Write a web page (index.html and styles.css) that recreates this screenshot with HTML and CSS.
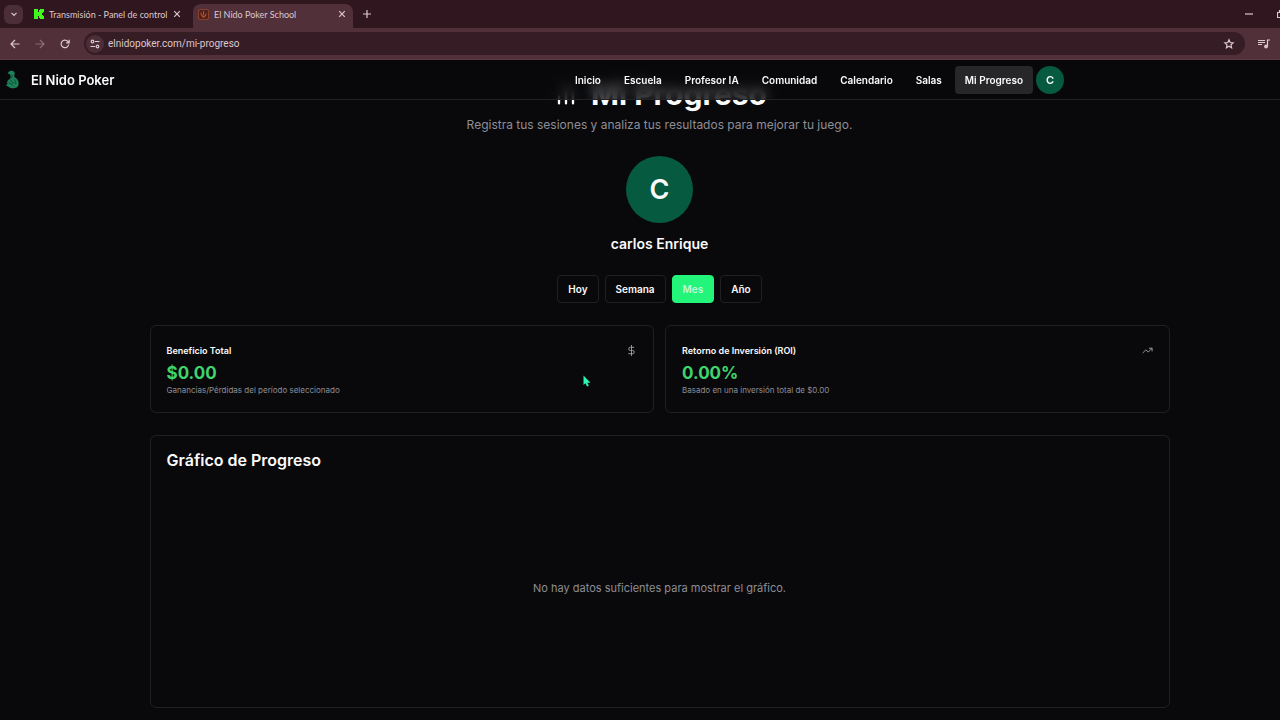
FILE: index.html
```html
<!DOCTYPE html>
<html lang="es">
<head>
    <meta charset="UTF-8">
    <meta name="viewport" content="width=device-width, initial-scale=1.0">
    <title>El Nido Poker School</title>
    <link rel="stylesheet" href="styles.css">
</head>
<body>
    <div class="window">
        <!-- Tabs -->
        <div class="tab-strip">
            <button class="tab-search" aria-label="Buscar pestañas">
                <svg width="8" height="8" viewBox="0 0 8 8"><path d="M1.500 2.800 4 5.300l2.500-2.500"/></svg>
            </button>
            <div class="tab">
                <svg class="favicon" width="10" height="10" viewBox="0 0 10 10"><path fill="#3dfa1c" d="M0 0h4v3h1V1h1V0h4v3H9v1H8v2h1v1h1v3H6V9H5V7H4v3H0z"/></svg>
                <span class="tab-title">Transmisión - Panel de control</span>
                <button class="tab-close" aria-label="Cerrar">
                    <svg width="8" height="8" viewBox="0 0 8 8"><path d="m1.200 1.200 5.600 5.600M6.800 1.200 1.200 6.800"/></svg>
                </button>
            </div>
            <div class="tab tab-active">
                <svg class="favicon" width="11" height="11" viewBox="0 0 11 11"><rect x=".5" y=".5" width="10" height="10" rx="2" fill="#4a1f1c" stroke="#8a4029"/><path d="M3 3.500c0 5 5 5 5 1M5.500 2v4M4 8h3" fill="none" stroke="#b04f2e"/></svg>
                <span class="tab-title">El Nido Poker School</span>
                <button class="tab-close" aria-label="Cerrar">
                    <svg width="8" height="8" viewBox="0 0 8 8"><path d="m1.200 1.200 5.600 5.600M6.800 1.200 1.200 6.800"/></svg>
                </button>
            </div>
            <button class="new-tab" aria-label="Nueva pestaña">
                <svg width="10" height="10" viewBox="0 0 10 10"><path d="M5 1v8M1 5h8"/></svg>
            </button>
            <div class="window-controls">
                <button aria-label="Minimizar"><svg width="8" height="8" viewBox="0 0 8 8"><path d="M0 4h8"/></svg></button>
                <button aria-label="Restaurar"><svg width="8" height="8" viewBox="0 0 8 8"><path d="M.5 2.500h5v5h-5zM2.500 2V.5h5v5H6"/></svg></button>
            </div>
        </div>

        <!-- Address bar -->
        <div class="toolbar">
            <button aria-label="Atrás"><svg width="10" height="10" viewBox="0 0 10 10"><path d="M9.500 5H1M5 1 1 5l4 4"/></svg></button>
            <button class="off" aria-label="Adelante"><svg width="10" height="10" viewBox="0 0 10 10"><path d="M.5 5H9M5 1l4 4-4 4"/></svg></button>
            <button aria-label="Recargar"><svg width="10" height="10" viewBox="0 0 10 10"><path d="M8.700 5.500A3.800 3.800 0 1 1 7.900 2.500L9 3.600M9.200.8v3H6.200"/></svg></button>
            <div class="address">
                <span class="site-info">
                    <svg width="10" height="10" viewBox="0 0 10 10"><circle cx="2.500" cy="2.500" r="1.300"/><path d="M5 2.500h4.500M.5 7.500H5"/><circle cx="7.500" cy="7.500" r="1.300"/></svg>
                </span>
                <input type="text" value="elnidopoker.com/mi-progreso" aria-label="Dirección">
                <button aria-label="Guardar"><svg width="12" height="12" viewBox="0 0 12 12"><path d="m6 1.800 1.200 2.700 3 .3-2.200 2 .6 3L6 8.300 3.400 9.800l.6-3-2.200-2 3-.3z"/></svg></button>
            </div>
            <button aria-label="Multimedia"><svg width="12" height="10" viewBox="0 0 12 10"><path d="M0 1.500h7M0 3.500h7M0 5.500h4M9.500 7.500V1H12"/><circle cx="8" cy="7.500" r="1.300" fill="#d9b3bd"/></svg></button>
        </div>

        <!-- Page header -->
        <header class="header">
            <a class="brand" href="#">
                <svg width="14" height="19" viewBox="0 0 14 19">
                    <path fill="#1c8058" d="M4 1.500C6 0 9 .5 9.500 2.500c.5 1.800-.3 3-.3 4.300 2 1.500 4.500 3.200 4.500 6.700 0 2.500-1.500 4-3.500 4.500-3 .8-5 0-6.500-1L.5 15l2-.8C1.500 12 2.500 10.500 4 9.500l1.500-1.700C6 6 5.500 5 4.300 4L2.500 3.500z"/>
                    <path fill="none" stroke="#0b3a2a" stroke-width=".7" d="M5 9.500c1 2 2.500 1.500 3.500 4M3.500 12.500c1.500 1.500 3 .5 4.500 3M9 9.500c1.500 1 2 2 1.500 4.500M7 4.500c.5 1.500 0 3-1 4"/>
                </svg>
                <span>El Nido Poker</span>
            </a>
            <nav class="nav">
                <a href="#">Inicio</a>
                <a href="#">Escuela</a>
                <a href="#">Profesor IA</a>
                <a href="#">Comunidad</a>
                <a href="#">Calendario</a>
                <a href="#">Salas</a>
                <a class="current" href="#">Mi Progreso</a>
            </nav>
            <button class="user">C</button>
        </header>

        <main class="main">
            <h1>
                <svg class="icon" width="28" height="28" viewBox="0 0 24 24"><path d="M18 20V10M12 20V4M6 20v-6"/></svg>
                Mi Progreso
            </h1>
            <p class="lead">Registra tus sesiones y analiza tus resultados para mejorar tu juego.</p>

            <div class="avatar">C</div>
            <h2 class="name">carlos Enrique</h2>

            <div class="filters">
                <button>Hoy</button>
                <button>Semana</button>
                <button class="selected">Mes</button>
                <button>Año</button>
            </div>

            <div class="stats">
                <section class="card stat">
                    <div class="stat-head">
                        <h3>Beneficio Total</h3>
                        <svg class="icon" width="11" height="11" viewBox="0 0 24 24"><path d="M12 1v22M17 5H9.500a3.500 3.500 0 0 0 0 7h5a3.500 3.500 0 0 1 0 7H6"/></svg>
                    </div>
                    <p class="value">$0.00</p>
                    <p class="note">Ganancias/Pérdidas del período seleccionado</p>
                </section>
                <section class="card stat">
                    <div class="stat-head">
                        <h3>Retorno de Inversión (ROI)</h3>
                        <svg class="icon" width="11" height="11" viewBox="0 0 24 24"><path d="m22 7-8.500 8.500-5-5L2 17M16 7h6v6"/></svg>
                    </div>
                    <p class="value">0.00%</p>
                    <p class="note">Basado en una inversión total de $0.00</p>
                </section>
            </div>

            <section class="card chart">
                <h2>Gráfico de Progreso</h2>
                <p class="empty">No hay datos suficientes para mostrar el gráfico.</p>
            </section>
        </main>

        <svg class="pointer" width="8" height="12" viewBox="0 0 8 12"><path d="M.5.5v9.500l2-1.700L4 11.500l1.800-.8-1.400-3H7.500z"/></svg>
    </div>
</body>
</html>
```

FILE: styles.css
```css
* {
    box-sizing: border-box;
}

body {
    margin: 0;
    background: #09090b;
    color: #fafafa;
    font-family: Inter, sans-serif;
    font-size: 10px;
    overflow: hidden;
}

h1, h2, h3, p {
    margin: 0;
}

button {
    display: flex;
    align-items: center;
    justify-content: center;
    padding: 0;
    border: none;
    background: none;
    color: inherit;
    font: inherit;
    cursor: pointer;
}

a {
    color: inherit;
    text-decoration: none;
}

/* the window runs past the right edge of the screen */
.window {
    margin-right: -39px;
    min-height: 100vh;
}

/* Browser */
.tab-strip,
.toolbar {
    display: flex;
    align-items: center;
    color: #dcc8cd;
    font-family: Roboto, "Noto Sans", sans-serif;
}

.tab-strip svg,
.toolbar svg {
    fill: none;
    stroke: currentColor;
    stroke-width: 1.2;
}

.tab-strip .favicon {
    flex: none;
    stroke: none;
}

.tab-strip {
    height: 28px;
    padding-left: 4px;
    background: #30161e;
    font-family: Lato, "Noto Sans", sans-serif;
    font-size: 9px;
}

.tab-search {
    width: 19px;
    height: 19px;
    border-radius: 6px;
    background: #4c2e38;
}

.tab {
    display: flex;
    align-items: center;
    gap: 5px;
    width: 160px;
    height: 24px;
    margin-top: 4px;
    padding: 0 7px 4px 5px;
}

.tab-active {
    border-radius: 8px 8px 0 0;
    background: #51303a;
}

.tab-search + .tab {
    width: 170px;
    padding: 0 12px 4px 11px;
}

.tab-title {
    flex: 1;
    white-space: nowrap;
}

.new-tab {
    width: 28px;
    height: 20px;
}

.window-controls {
    display: flex;
    gap: 24px;
    margin-left: auto;
    padding-right: 34px;
}

.toolbar {
    gap: 15px;
    height: 32px;
    padding: 0 49px 0 10px;
    background: #51303a;
    border-bottom: 1px solid #573c44;
}

.toolbar .off {
    opacity: 0.4;
}

.address {
    flex: 1;
    display: flex;
    align-items: center;
    gap: 4px;
    height: 23px;
    margin: 0 -2px 0 -1px;
    padding: 0 10px 0 2px;
    border-radius: 12px;
    background: #361c25;
}

.site-info {
    display: flex;
    align-items: center;
    justify-content: center;
    width: 18px;
    height: 18px;
    border-radius: 50%;
    background: #4c2e38;
}

.address input {
    flex: 1;
    padding: 0;
    border: none;
    outline: none;
    background: none;
    color: inherit;
    font: inherit;
}

/* Page header */
.header {
    position: sticky;
    top: 0;
    z-index: 1;
    display: flex;
    align-items: center;
    height: 40px;
    padding: 0 255px 0 5px;
    border-bottom: 1px solid #222225;
    background: rgba(9, 9, 11, 0.7);
    backdrop-filter: blur(6px);
}

.brand {
    display: flex;
    align-items: center;
    gap: 12px;
    font-size: 13px;
    font-weight: 600;
}

.nav {
    display: flex;
    gap: 3px;
    margin-left: auto;
    font-weight: 600;
}

.nav a {
    padding: 0 10px;
    border-radius: 4px;
    line-height: 28px;
}

.nav .current {
    background: #27272a;
}

.user {
    width: 28px;
    height: 28px;
    margin-left: 3px;
    border-radius: 50%;
    background: #055a40;
    font-size: 11px;
    font-weight: 600;
}

/* Progress page */
.main {
    display: flex;
    flex-direction: column;
    align-items: center;
    max-width: 1020px;
    margin: -24px auto 0;
}

.icon {
    fill: none;
    stroke: currentColor;
    stroke-width: 2;
    stroke-linecap: round;
    stroke-linejoin: round;
}

h1 {
    display: flex;
    align-items: center;
    gap: 11px;
    font-size: 30px;
    font-weight: 700;
    line-height: 36px;
}

.lead {
    margin-top: 4px;
    color: #8e8e96;
    font-size: 12px;
    line-height: 18px;
}

.avatar {
    width: 67px;
    height: 67px;
    margin-top: 22px;
    border-radius: 50%;
    background: #055a40;
    font-size: 27px;
    font-weight: 600;
    line-height: 67px;
    text-align: center;
}

.name {
    margin-top: 11px;
    font-size: 14px;
    font-weight: 600;
    line-height: 20px;
}

.filters {
    display: flex;
    gap: 6px;
    margin-top: 21px;
}

.filters button {
    height: 28px;
    padding: 0 10px;
    border: 1px solid #202023;
    border-radius: 4px;
    font-weight: 600;
}

.filters .selected {
    border-color: #22f57a;
    background: #22f57a;
    color: #c4fbd9;
}

.stats {
    display: flex;
    gap: 11px;
    align-self: stretch;
    margin-top: 22px;
}

.card {
    padding: 16px;
    border: 1px solid #202023;
    border-radius: 6px;
}

.stat {
    flex: 1;
}

.stat-head {
    display: flex;
    align-items: center;
    justify-content: space-between;
    height: 16px;
}

.stat-head h3 {
    font-size: 9px;
    font-weight: 600;
}

.stat-head .icon {
    color: #a1a1aa;
}

.value {
    margin-top: 4px;
    color: #3fd46c;
    font-size: 17px;
    font-weight: 700;
    line-height: 22px;
}

.note {
    color: #8e8e96;
    font-size: 8px;
    line-height: 12px;
}

.chart {
    display: flex;
    flex-direction: column;
    align-self: stretch;
    min-height: 273px;
    margin-top: 22px;
}

.chart h2 {
    font-size: 16px;
    font-weight: 600;
    line-height: 16px;
}

.empty {
    margin: auto;
    padding-top: 16px;
    color: #8e8e96;
    font-size: 11px;
}

.pointer {
    position: absolute;
    left: 583px;
    top: 375px;
    fill: #2af5b4;
}
```
